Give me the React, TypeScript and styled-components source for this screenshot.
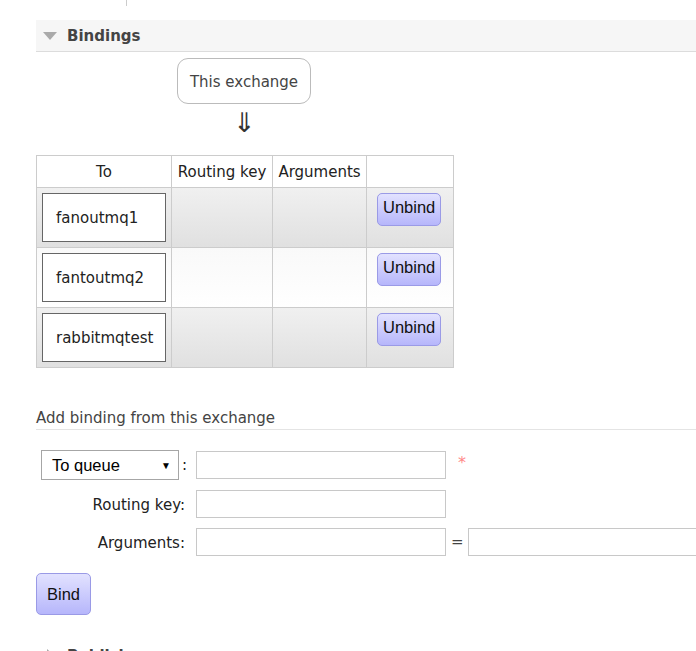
import React from "react";
import styled, { createGlobalStyle } from "styled-components";

const Global = createGlobalStyle`
  html, body { margin: 0; padding: 0; background: #fff; }
  body { font-family: "DejaVu Sans", Verdana, sans-serif; color: #444; overflow: hidden; }
  * { box-sizing: border-box; }
`;

const Page = styled.div`
  width: 696px;
  height: 651px;
  overflow: hidden;
`;

const TopStub = styled.div`
  margin-left: 126px;
  width: 1px;
  height: 6px;
  background: #ccc;
  margin-bottom: 14px;
`;

const Section = styled.div`
  margin-left: 36px;
`;

const SectionHeader = styled.div<{ $open: boolean }>`
  display: flex;
  align-items: center;
  height: 32px;
  padding-left: ${(p) => (p.$open ? "7px" : "11px")};
  background: ${(p) => (p.$open ? "#f6f6f6" : "transparent")};
  border-bottom: ${(p) => (p.$open ? "1px solid #dcdcdc" : "none")};
  font-size: 15px;
  font-weight: bold;
  color: #444;
`;

const TriDown = styled.span`
  width: 0;
  height: 0;
  border-left: 7px solid transparent;
  border-right: 7px solid transparent;
  border-top: 8px solid #aaa;
  margin-right: 10px;
  margin-top: 1px;
`;

const TriRight = styled.span`
  width: 0;
  height: 0;
  border-top: 7px solid transparent;
  border-bottom: 7px solid transparent;
  border-left: 8px solid #aaa;
  margin-right: 12px;
`;

const Diagram = styled.div`
  display: flex;
  flex-direction: column;
  align-items: center;
  width: 416px;
  padding-top: 6px;
`;

const ExchangeBox = styled.div`
  width: 134px;
  height: 46px;
  border: 1px solid #bbb;
  border-radius: 11px;
  display: flex;
  align-items: center;
  justify-content: center;
  padding-top: 1px;
  font-size: 15px;
  color: #444;
`;

const Arrow = styled.div`
  font-size: 27px;
  line-height: 28px;
  height: 28px;
  margin-top: 5px;
  color: #333;
  font-weight: 300;
  font-family: "DejaVu Sans", sans-serif;
`;

const Table = styled.table`
  border-collapse: collapse;
  margin-top: 18px;
  font-size: 15px;
`;

const Th = styled.th<{ $w: number }>`
  width: ${(p) => p.$w}px;
  height: 32px;
  border: 1px solid #ccc;
  font-weight: normal;
  color: #222;
  background: #fff;
  padding: 0 5px;
  white-space: nowrap;
`;

const Tr = styled.tr<{ $alt: boolean }>`
  background: ${(p) =>
    p.$alt
      ? "linear-gradient(#f9f9f9, #ffffff)"
      : "linear-gradient(#f0f0f0, #e0e0e0)"};
`;

const Td = styled.td`
  border: 1px solid #ccc;
  height: 60px;
  vertical-align: top;
  padding: 5px;
`;

const QueueBox = styled.div`
  width: 124px;
  height: 49px;
  border: 1px solid #666;
  background: #fff;
  display: flex;
  align-items: center;
  padding-left: 13px;
  padding-top: 1px;
  color: #222;
  font-size: 15px;
`;

const Button = styled.button<{ $big?: boolean }>`
  font-family: "Liberation Sans", Arial, sans-serif;
  font-size: 16.5px;
  color: #111;
  border: 1px solid #9a9ae6;
  border-radius: 5px;
  background: linear-gradient(#e2e2ff, #b6b6fb);
  padding: 0 ${(p) => (p.$big ? "10px" : "5px")};
  height: ${(p) => (p.$big ? "42px" : "33px")};
  cursor: pointer;
`;

const UnbindButton = styled(Button)`
  margin-left: 5px;
  padding-bottom: 5px;
`;

const SubHeading = styled.div`
  margin-top: 40px;
  font-size: 15px;
  color: #444;
  padding-top: 1px;
  padding-bottom: 2px;
  border-bottom: 1px solid #e4e4e4;
  height: 22px;
  line-height: 18px;
`;

const FormGrid = styled.div`
  display: grid;
  grid-template-columns: 160px 250px auto;
  row-gap: 10px;
  align-items: center;
  margin-top: 20px;
`;

const Label = styled.div`
  text-align: right;
  padding-right: 11px;
  padding-top: 1px;
  font-size: 15px;
  color: #222;
`;

const SelectCell = styled.div`
  display: flex;
  align-items: center;
  padding-left: 5px;
  font-size: 15px;
  color: #222;
`;

const SelectBox = styled.div`
  width: 138px;
  height: 30px;
  border: 1px solid #a6a6a6;
  display: flex;
  align-items: center;
  justify-content: space-between;
  padding: 0 7px 0 10px;
  font-family: "Liberation Sans", Arial, sans-serif;
  font-size: 16.5px;
  color: #000;
  margin-right: 3px;
`;

const Caret = styled.span`
  font-size: 10px;
`;

const Input = styled.div<{ $w?: number }>`
  width: ${(p) => p.$w ?? 250}px;
  height: 28px;
  border: 1px solid #c8c8c8;
  background: #fff;
`;

const Extra = styled.div`
  display: flex;
  align-items: center;
`;

const Required = styled.span`
  color: #f88;
  font-size: 16px;
  margin-left: 12px;
  margin-top: -6px;
`;

const Equals = styled.span`
  margin: 0 4px 0 5px;
  font-size: 15px;
  color: #444;
`;

const BindRow = styled.div`
  margin-top: 17px;
`;

const PublishWrap = styled.div`
  margin-top: 25px;
`;

const rows = ["fanoutmq1", "fantoutmq2", "rabbitmqtest"];

export default function App() {
  return (
    <Page>
      <Global />
      <TopStub />
      <Section>
        <SectionHeader $open>
          <TriDown />
          Bindings
        </SectionHeader>
        <Diagram>
          <ExchangeBox>This exchange</ExchangeBox>
          <Arrow>⇓</Arrow>
        </Diagram>
        <Table>
          <thead>
            <tr>
              <Th $w={135}>To</Th>
              <Th $w={101}>Routing key</Th>
              <Th $w={94}>Arguments</Th>
              <Th $w={87}></Th>
            </tr>
          </thead>
          <tbody>
            {rows.map((r, i) => (
              <Tr key={r} $alt={i % 2 === 1}>
                <Td>
                  <QueueBox>{r}</QueueBox>
                </Td>
                <Td />
                <Td />
                <Td>
                  <UnbindButton>Unbind</UnbindButton>
                </Td>
              </Tr>
            ))}
          </tbody>
        </Table>
        <SubHeading>Add binding from this exchange</SubHeading>
        <FormGrid>
          <SelectCell>
            <SelectBox>
              To queue <Caret>▼</Caret>
            </SelectBox>
            :
          </SelectCell>
          <Input />
          <Extra>
            <Required>*</Required>
          </Extra>
          <Label>Routing key:</Label>
          <Input />
          <Extra />
          <Label>Arguments:</Label>
          <Input />
          <Extra>
            <Equals>=</Equals>
            <Input $w={240} />
          </Extra>
        </FormGrid>
        <BindRow>
          <Button $big>Bind</Button>
        </BindRow>
      </Section>
      <PublishWrap>
        <Section>
          <SectionHeader $open={false}>
            <TriRight />
            Publish message
          </SectionHeader>
        </Section>
      </PublishWrap>
    </Page>
  );
}
